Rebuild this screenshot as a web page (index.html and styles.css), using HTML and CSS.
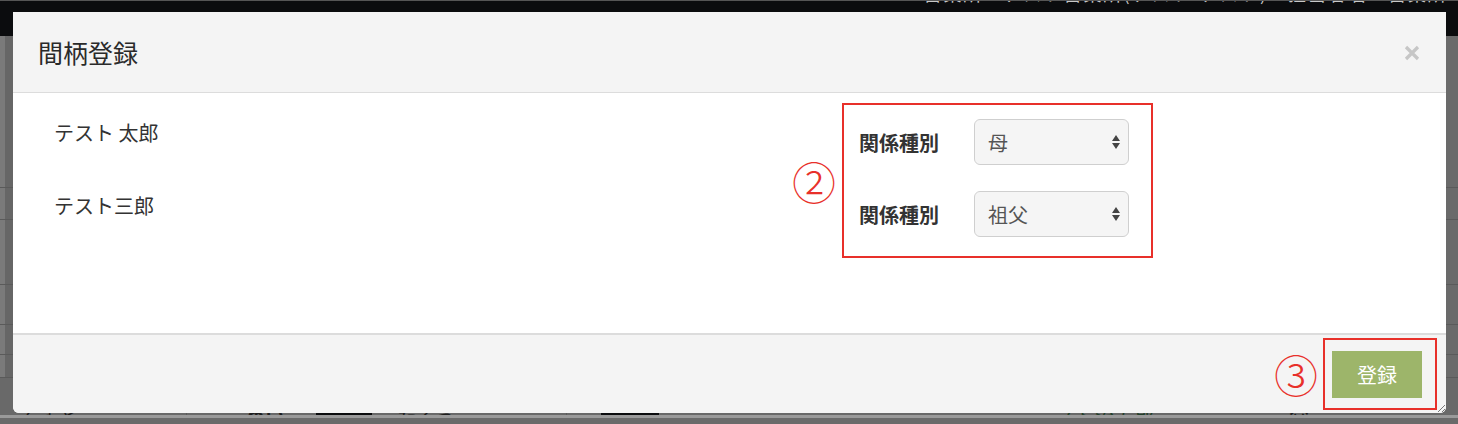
FILE: index.html
```html
<!DOCTYPE html>
<html lang="ja">
<head>
<meta charset="utf-8">
<title>間柄登録</title>
<link rel="stylesheet" href="styles.css">
</head>
<body>
<div class="page">
  <div class="topbar"><span class="topbar-text">営業所：テスト営業所(テスト-テスト)　担当者名：営業所</span></div>
  <div class="rows">
    <div class="row r1"></div>
    <div class="row r2"></div>
    <div class="row r3"></div>
    <div class="row r4"></div>
    <div class="row r5"></div>
    <div class="row r6"></div>
  </div>
  <div class="lastrow">
    <div class="cell c1">てすと</div>
    <div class="cell c2"><b>めい</b></div>
    <div class="cell c3"><span class="blk"></span></div>
    <div class="cell c4">たろう</div>
    <div class="cell c5"><span class="blk"></span></div>
    <div class="cell c6">テスト治五郎</div>
    <div class="cell c7">父</div>
  </div>
</div>

<div class="modal">
  <div class="modal-header">
    <h4 class="modal-title">間柄登録</h4>
    <svg class="close" width="16" height="16" viewBox="0 0 16 16"><path d="M2 2 L14 14 M14 2 L2 14" stroke="#c6c6c6" stroke-width="3.2" stroke-linecap="butt"/></svg>
  </div>
  <div class="modal-body">
    <div class="names">
      <div class="name">テスト 太郎</div>
      <div class="name">テスト三郎</div>
    </div>
    <div class="rel-group">
      <span class="marker">②</span>
      <div class="redbox rel-box">
        <div class="rel-row">
          <span class="rel-label">関係種別</span>
          <div class="select"><span>母</span><svg width="10" height="16" viewBox="0 0 10 16"><path d="M5 1 L9 7 L1 7 Z M5 15 L9 9 L1 9 Z" fill="#444"/></svg></div>
        </div>
        <div class="rel-row">
          <span class="rel-label">関係種別</span>
          <div class="select"><span>祖父</span><svg width="10" height="16" viewBox="0 0 10 16"><path d="M5 1 L9 7 L1 7 Z M5 15 L9 9 L1 9 Z" fill="#444"/></svg></div>
        </div>
      </div>
    </div>
  </div>
  <div class="modal-footer">
    <span class="marker">③</span>
    <div class="redbox btn-box">
      <button class="btn-save">登録</button>
    </div>
    <svg class="resize" width="10" height="10" viewBox="0 0 10 10"><path d="M9 2 L2 9 M9 6 L6 9" stroke="#777" stroke-width="1"/></svg>
  </div>
</div>
</body>
</html>
```

FILE: styles.css
```css
* { box-sizing: border-box; }
html, body { margin: 0; padding: 0; }
body {
  width: 1458px;
  height: 424px;
  overflow: hidden;
  background: #6a6a6a;
  font-family: "Noto Sans CJK JP", "Noto Sans", sans-serif;
  position: relative;
}

.page {
  display: flex;
  flex-direction: column;
  height: 424px;
  overflow: hidden;
}
.topbar {
  flex: none;
  height: 36px;
  background: #0b0c0e;
  border-top: 1px solid #555;
  overflow: hidden;
  display: flex;
  justify-content: flex-end;
  padding-right: 10px;
}
.topbar-text {
  color: #c8c8c8;
  font-size: 18px;
  line-height: 18px;
  margin-top: -17px;
  white-space: nowrap;
  letter-spacing: 2px;
}
.rows {
  flex: none;
  display: flex;
  flex-direction: column;
  background: linear-gradient(to right, #7a7a7a 0, #7a7a7a 5px, #666 5px, #666 13px, #6a6a6a 13px);
}
.row { border-bottom: 1px solid #5a5a5a; }
.r1 { height: 152px; }
.r2 { height: 32px; }
.r3 { height: 65px; }
.r4 { height: 40px; }
.r5 { height: 30px; }
.r6 { height: 23px; }

.lastrow {
  flex: none;
  display: grid;
  grid-template-columns: 187px 129px 56px 195px 34px 58px 375px 255px 169px;
  height: 40px;
  background: #696969;
  border-bottom: 3px solid #9a9a9a;
  overflow: hidden;
}
.cell {
  font-size: 20px;
  color: #1e1e1e;
  padding-top: 29px;
  line-height: 20px;
  white-space: nowrap;
  overflow: hidden;
}
.c1 { padding-left: 18px; border-right: 1px solid #5a5a5a; }
.c2 { padding-left: 58px; }
.c3 { background: #0b0c0e; }
.c4 { padding-left: 25px; grid-column: 4 / 5; border-right: 1px solid #5a5a5a; }
.c5 { grid-column: 6 / 7; background: #0b0c0e; }
.c6 { grid-column: 7 / 9; padding-left: 376px; color: #23402a; }
.c7 { grid-column: 9 / 10; padding-left: 0; }
.blk { display: block; }

/* modal */
.modal {
  position: absolute;
  left: 13px;
  top: 12px;
  width: 1433px;
  height: 401px;
  background: #fff;
  border-radius: 0 0 6px 6px;
  display: flex;
  flex-direction: column;
  overflow: hidden;
}
.modal-header {
  height: 81px;
  background: #f4f4f4;
  border-bottom: 1px solid #dcdcdc;
  display: flex;
  align-items: center;
  justify-content: space-between;
  padding: 0 26px 0 25px;
}
.modal-title {
  margin: 0;
  font-size: 25px;
  font-weight: 400;
  color: #2a2a2a;
  line-height: 30px;
}
.close { display: block; margin-top: 2px; }

.modal-body {
  height: 242px;
  border-bottom: 2px solid #dcdcdc;
  display: flex;
  justify-content: space-between;
  align-items: flex-start;
  padding: 10px 293px 0 41px;
}
.names {
  display: flex;
  flex-direction: column;
  gap: 43px;
  padding-top: 15px;
}
.name {
  font-size: 20px;
  line-height: 30px;
  color: #333;
}
.rel-group {
  display: flex;
  align-items: center;
  gap: 6px;
}
.marker {
  font-size: 44px;
  line-height: 44px;
  color: #e8302a;
  font-weight: 300;
}
.redbox { border: 2px solid #e8302a; }
.rel-box {
  width: 311px;
  height: 155px;
  padding: 14px 22px 0 15px;
  display: flex;
  flex-direction: column;
  gap: 26px;
}
.rel-row {
  display: flex;
  align-items: center;
  height: 46px;
}
.rel-label {
  width: 115px;
  font-size: 20px;
  font-weight: 700;
  color: #333;
}
.select {
  width: 155px;
  height: 46px;
  background: #f5f5f5;
  border: 1px solid #cfcfcf;
  border-radius: 6px;
  display: flex;
  align-items: center;
  justify-content: space-between;
  padding: 0 7px 0 13px;
  font-size: 20px;
  color: #555;
}
.select svg { display: block; }

.modal-footer {
  flex: 1;
  background: #f4f4f4;
  display: flex;
  align-items: center;
  justify-content: flex-end;
  padding-right: 9px;
  gap: 5px;
  position: relative;
}
.btn-box {
  width: 114px;
  height: 72px;
  padding: 11px 0 0 7px;
}
.btn-save {
  width: 90px;
  height: 47px;
  background: #9db56a;
  border: none;
  border-radius: 0;
  color: #fff;
  font-family: "Noto Sans CJK JP", "Noto Sans", sans-serif;
  font-size: 20px;
  padding: 0;
}
.resize {
  position: absolute;
  right: 0;
  bottom: 0;
}
```
